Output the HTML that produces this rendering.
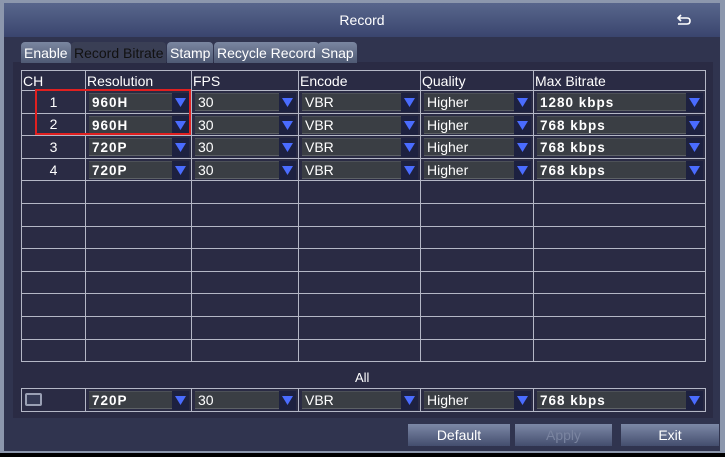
<!DOCTYPE html>
<html><head><meta charset="utf-8"><style>
*{margin:0;padding:0;box-sizing:border-box}
body{width:725px;height:457px;background:#000;font-family:"Liberation Sans",sans-serif;position:relative;overflow:hidden}
.frame{position:absolute;left:0;top:0;width:725px;height:453px;background:#8c97ad}
.win{position:absolute;left:4px;top:3px;width:716px;height:448px;background:#30344f}
.title{position:absolute;left:0;top:0;width:716px;height:34px;background:linear-gradient(#58668c,#3a456e);color:#fff;font-size:14px;text-align:center;line-height:34px}
.inner{position:absolute;left:9px;top:59px;width:700px;height:356px;background:#2a2b44}
.tab{position:absolute;top:42px;height:21px;background:linear-gradient(#7a86a0,#4f5a74);color:#fff;font-size:14px;line-height:22px;padding:0 3px;border-radius:4px 4px 0 0}
.tab.act{background:#3a3f55;color:#111}
table{position:absolute;left:21px;border-collapse:collapse;table-layout:fixed}
td{border:1px solid #b4b7c6;height:22.6px;color:#fff;font-size:14px;padding:0;vertical-align:middle}
tr.h td{height:20px;font-size:14px;padding-left:1px;color:#fff}
.dd{position:relative;height:18px;margin:1px 3px 0 3px;background:#3a3e44;border-top:1px solid #4d5158;border-bottom:1px solid #5d6166;color:#fff;font-size:14px;line-height:17px;padding-left:3px}
.b{font-weight:bold;letter-spacing:1px;font-size:13.5px}
.ar{position:absolute;right:-1px;top:-1px;width:17px;height:19px;background:#1d2140}
.ar svg{position:absolute;left:3px;top:5px}
.ch{text-align:center}
.btn{position:absolute;top:424px;height:22px;background:linear-gradient(#7c88a6,#444e6e);color:#fff;font-size:14px;text-align:center;line-height:22px}
</style></head><body>
<div class="frame"></div>
<div class="win">
<div class="title">Record<svg style="position:absolute;right:28px;top:11px" width="16" height="12" viewBox="0 0 16 12"><path d="M5 1 L2 4 L5 7 M2 4 H11 Q14 4 14 7 Q14 10 11 10 H2" fill="none" stroke="#fff" stroke-width="1.6"/></svg></div>
<div class="inner"></div>
</div>
<div class="tab" style="left:21px">Enable</div>
<div class="tab act" style="left:71px">Record Bitrate</div>
<div class="tab" style="left:167px">Stamp</div>
<div class="tab" style="left:214px">Recycle Record</div>
<div class="tab" style="left:318px">Snap</div>

<table style="top:70px">
<colgroup><col style="width:64px"><col style="width:106px"><col style="width:107px"><col style="width:122px"><col style="width:113px"><col style="width:172px"></colgroup>
<tr class="h"><td>CH</td><td>Resolution</td><td>FPS</td><td>Encode</td><td>Quality</td><td>Max Bitrate</td></tr>
<tr><td class="ch">1</td><td><div class="dd b">960H<div class="ar"><svg width="11" height="9"><path d="M0 0H11L5.5 9Z" fill="#4a6cff"/></svg></div></div></td><td><div class="dd">30<div class="ar"><svg width="11" height="9"><path d="M0 0H11L5.5 9Z" fill="#4a6cff"/></svg></div></div></td><td><div class="dd">VBR<div class="ar"><svg width="11" height="9"><path d="M0 0H11L5.5 9Z" fill="#4a6cff"/></svg></div></div></td><td><div class="dd">Higher<div class="ar"><svg width="11" height="9"><path d="M0 0H11L5.5 9Z" fill="#4a6cff"/></svg></div></div></td><td><div class="dd b">1280 kbps<div class="ar"><svg width="11" height="9"><path d="M0 0H11L5.5 9Z" fill="#4a6cff"/></svg></div></div></td></tr>
<tr><td class="ch">2</td><td><div class="dd b">960H<div class="ar"><svg width="11" height="9"><path d="M0 0H11L5.5 9Z" fill="#4a6cff"/></svg></div></div></td><td><div class="dd">30<div class="ar"><svg width="11" height="9"><path d="M0 0H11L5.5 9Z" fill="#4a6cff"/></svg></div></div></td><td><div class="dd">VBR<div class="ar"><svg width="11" height="9"><path d="M0 0H11L5.5 9Z" fill="#4a6cff"/></svg></div></div></td><td><div class="dd">Higher<div class="ar"><svg width="11" height="9"><path d="M0 0H11L5.5 9Z" fill="#4a6cff"/></svg></div></div></td><td><div class="dd b">768 kbps<div class="ar"><svg width="11" height="9"><path d="M0 0H11L5.5 9Z" fill="#4a6cff"/></svg></div></div></td></tr>
<tr><td class="ch">3</td><td><div class="dd b">720P<div class="ar"><svg width="11" height="9"><path d="M0 0H11L5.5 9Z" fill="#4a6cff"/></svg></div></div></td><td><div class="dd">30<div class="ar"><svg width="11" height="9"><path d="M0 0H11L5.5 9Z" fill="#4a6cff"/></svg></div></div></td><td><div class="dd">VBR<div class="ar"><svg width="11" height="9"><path d="M0 0H11L5.5 9Z" fill="#4a6cff"/></svg></div></div></td><td><div class="dd">Higher<div class="ar"><svg width="11" height="9"><path d="M0 0H11L5.5 9Z" fill="#4a6cff"/></svg></div></div></td><td><div class="dd b">768 kbps<div class="ar"><svg width="11" height="9"><path d="M0 0H11L5.5 9Z" fill="#4a6cff"/></svg></div></div></td></tr>
<tr><td class="ch">4</td><td><div class="dd b">720P<div class="ar"><svg width="11" height="9"><path d="M0 0H11L5.5 9Z" fill="#4a6cff"/></svg></div></div></td><td><div class="dd">30<div class="ar"><svg width="11" height="9"><path d="M0 0H11L5.5 9Z" fill="#4a6cff"/></svg></div></div></td><td><div class="dd">VBR<div class="ar"><svg width="11" height="9"><path d="M0 0H11L5.5 9Z" fill="#4a6cff"/></svg></div></div></td><td><div class="dd">Higher<div class="ar"><svg width="11" height="9"><path d="M0 0H11L5.5 9Z" fill="#4a6cff"/></svg></div></div></td><td><div class="dd b">768 kbps<div class="ar"><svg width="11" height="9"><path d="M0 0H11L5.5 9Z" fill="#4a6cff"/></svg></div></div></td></tr>
<tr><td></td><td></td><td></td><td></td><td></td><td></td></tr>
<tr><td></td><td></td><td></td><td></td><td></td><td></td></tr>
<tr><td></td><td></td><td></td><td></td><td></td><td></td></tr>
<tr><td></td><td></td><td></td><td></td><td></td><td></td></tr>
<tr><td></td><td></td><td></td><td></td><td></td><td></td></tr>
<tr><td></td><td></td><td></td><td></td><td></td><td></td></tr>
<tr><td></td><td></td><td></td><td></td><td></td><td></td></tr>
<tr><td></td><td></td><td></td><td></td><td></td><td></td></tr>
</table>
<div style="position:absolute;left:35px;top:89px;width:156px;height:46px;border:2px solid #e02020"></div>
<div style="position:absolute;left:355px;top:370px;color:#fff;font-size:13px">All</div>
<table style="top:388px">
<colgroup><col style="width:64px"><col style="width:106px"><col style="width:107px"><col style="width:122px"><col style="width:113px"><col style="width:172px"></colgroup>
<tr><td><div style="margin-left:3px;width:17px;height:13px;border:2px solid #9aa0b4;background:#353a55;border-radius:2px"></div></td><td><div class="dd b">720P<div class="ar"><svg width="11" height="9"><path d="M0 0H11L5.5 9Z" fill="#4a6cff"/></svg></div></div></td><td><div class="dd">30<div class="ar"><svg width="11" height="9"><path d="M0 0H11L5.5 9Z" fill="#4a6cff"/></svg></div></div></td><td><div class="dd">VBR<div class="ar"><svg width="11" height="9"><path d="M0 0H11L5.5 9Z" fill="#4a6cff"/></svg></div></div></td><td><div class="dd">Higher<div class="ar"><svg width="11" height="9"><path d="M0 0H11L5.5 9Z" fill="#4a6cff"/></svg></div></div></td><td><div class="dd b">768 kbps<div class="ar"><svg width="11" height="9"><path d="M0 0H11L5.5 9Z" fill="#4a6cff"/></svg></div></div></td></tr>
</table>
<div class="btn" style="left:408px;width:102px">Default</div>
<div class="btn" style="left:515px;width:97px;color:#7a84a0">Apply</div>
<div class="btn" style="left:621px;width:98px">Exit</div>
</body></html>
